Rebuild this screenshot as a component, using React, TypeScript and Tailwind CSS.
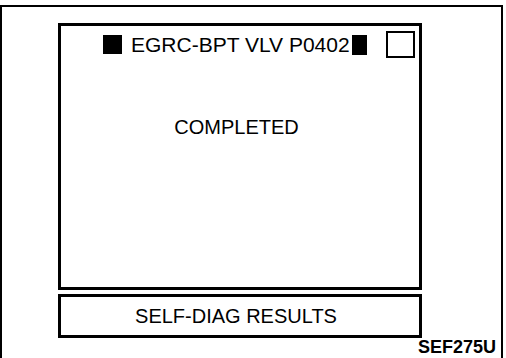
export default function App() {
  return (
    <div className="w-[506px] h-[358px] bg-white overflow-hidden font-['Liberation_Sans',Arial,sans-serif] text-black">
      <div className="mt-[5px] w-[503px] h-[353px] border-t-2 border-l-2 border-r-2 border-black pl-[56px] pt-[16px]">
        <div className="w-[364px] h-[267px] border-[3px] border-black flex flex-col">
          <div className="flex items-center pl-[42px] pt-[5px] h-[32px]">
            <span className="w-[19px] h-[19px] bg-black" />
            <span className="ml-[9px] text-[21px] leading-none">EGRC-BPT VLV P0402</span>
            <span className="ml-[2px] w-[15px] h-[20px] bg-black" />
            <span className="ml-[19px] w-[29px] h-[27px] border-2 border-black" />
          </div>
          <div className="mt-[58px] text-center pr-[7px] text-[20px] leading-[22px]">COMPLETED</div>
        </div>
        <div className="mt-[4px] w-[364px] h-[44px] border-[3px] border-black flex items-center justify-center pr-[8px] text-[20px] leading-none">
          SELF-DIAG RESULTS
        </div>
        <div className="w-[438px] -mt-[1px] text-right font-bold text-[18px] leading-[20px]">SEF275U</div>
      </div>
    </div>
  )
}
